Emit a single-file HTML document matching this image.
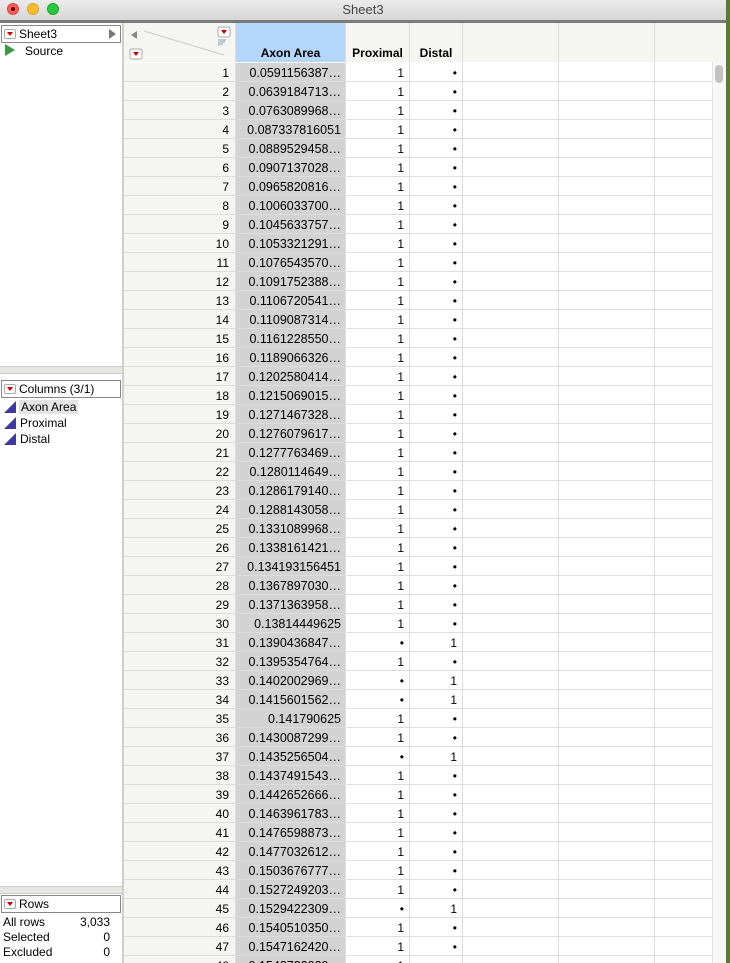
<!DOCTYPE html>
<html><head><meta charset="utf-8"><style>
*{margin:0;padding:0;box-sizing:border-box}
html,body{width:730px;height:963px;overflow:hidden}
body{background:#5a7a35;font-family:"Liberation Sans",Arial,sans-serif;font-size:12px;color:#000;position:relative}
.title{position:absolute;left:0;top:0;width:726px;height:20px;background:linear-gradient(#ececec,#d6d6d6);text-align:center;line-height:19px;font-size:13px;color:#444}
.dot{position:absolute;top:3px;width:12px;height:12px;border-radius:50%}
.bar{position:absolute;left:0;top:20px;width:726px;height:3px;background:#7a7a7a}
.left{position:absolute;left:0;top:23px;width:122px;height:940px;background:#fff;overflow:hidden}
.split{position:absolute;left:122px;top:23px;width:2px;height:940px;background:#cfcfcb}
.sep{position:absolute;left:0;width:122px;height:8px;background:#e6e6e2;border-top:1px solid #ccc;border-bottom:1px solid #ccc}
.box{position:absolute;left:1px;width:120px;height:18px;border:1px solid #888;background:#fff;line-height:16px;padding-left:17px;font-size:12px}
.tri{position:absolute;left:2px;top:3px;width:12px;height:10px;border:1px solid #aaa;border-radius:2px;background:#fff}
.tri:after{content:"";position:absolute;left:2px;top:2px;border-left:3px solid transparent;border-right:3px solid transparent;border-top:4px solid #c00}
.col{position:absolute;left:20px;font-size:12px}
.ic{position:absolute;left:4px;width:0;height:0;border-left:12px solid transparent;border-bottom:12px solid #3b3b9e}
.grid{position:absolute;left:124px;top:23px;width:588px;height:940px;background:#fff;overflow:hidden}
.hdr{position:absolute;top:0;height:39px;background:#f5f5f1;border-right:1px solid #ddd;font-weight:bold;text-align:center;line-height:12px;padding-top:24px}
.row{position:absolute;left:0;width:588px;height:19px;border-bottom:1px solid #ddd}
.c{position:absolute;top:0;height:18px;line-height:20px;border-right:1px solid #ddd;text-align:right;padding-right:5px;white-space:nowrap;overflow:hidden}
.sb{position:absolute;left:712px;top:62px;width:14px;height:901px;background:#f7f7f7;border-left:1px solid #e6e6e6}
</style></head><body>
<div class="title">Sheet3
<div class="dot" style="left:7px;background:#fd5e57;border:1px solid #e0443e"><div style="width:4px;height:4px;background:#600;border-radius:50%;margin:3px"></div></div>
<div class="dot" style="left:27px;background:#febc2e;border:1px solid #dea123"></div>
<div class="dot" style="left:47px;background:#28c840;border:1px solid #1aab29"></div>
</div>
<div class="bar"></div>
<div class="left">
<div class="box" style="top:2px">Sheet3<span class="tri"></span><span style="position:absolute;right:4px;top:3px;border-top:5px solid transparent;border-bottom:5px solid transparent;border-left:7px solid #777"></span></div>
<div style="position:absolute;left:5px;top:21px;border-top:6px solid transparent;border-bottom:6px solid transparent;border-left:10px solid #3a9a4a"></div>
<div style="position:absolute;left:25px;top:21px">Source</div>
<div class="sep" style="top:343px"></div>
<div class="box" style="top:357px">Columns (3/1)<span class="tri"></span></div>
<div class="ic" style="top:378px"></div><div class="col" style="top:377px;background:#e4e4e4;padding:0 2px;left:19px">Axon Area</div>
<div class="ic" style="top:394px"></div><div class="col" style="top:393px">Proximal</div>
<div class="ic" style="top:410px"></div><div class="col" style="top:409px">Distal</div>
<div class="sep" style="top:863px"></div>
<div class="box" style="top:872px">Rows<span class="tri"></span></div>
<div style="position:absolute;left:3px;top:892px;width:107px;line-height:15px">
<div>All rows<span style="float:right">3,033</span></div>
<div>Selected<span style="float:right">0</span></div>
<div>Excluded<span style="float:right">0</span></div>
</div>
</div>
<div class="split"></div>
<div class="grid" id="g">
<div class="hdr" style="left:0;width:112px;background:#f5f5f1">
<svg width="112" height="39" style="position:absolute;left:0;top:0"><line x1="20" y1="8" x2="100" y2="32" stroke="#ccc"/><polygon points="7,12 13,8 13,16" fill="#888"/><rect x="94" y="4" width="12" height="10" rx="2" fill="#fff" stroke="#aaa"/><polygon points="97,7 103,7 100,11" fill="#c00"/><rect x="6" y="26" width="12" height="10" rx="2" fill="#fff" stroke="#aaa"/><polygon points="9,29 15,29 12,33" fill="#c00"/><g stroke="#8aa0b8"><line x1="95" y1="16" x2="95" y2="23"/><line x1="96" y1="17" x2="102" y2="17"/><line x1="96" y1="19" x2="101" y2="19"/><line x1="96" y1="21" x2="99" y2="21"/></g></svg></div>
<div class="hdr" style="left:112px;width:110px;background:#b4d6fb">Axon Area</div>
<div class="hdr" style="left:222px;width:64px">Proximal</div>
<div class="hdr" style="left:286px;width:53px">Distal</div>
<div class="hdr" style="left:339px;width:96px"></div>
<div class="hdr" style="left:435px;width:96px"></div>
<div class="hdr" style="left:531px;width:57px;border-right:none"></div>
</div>
<div style="position:absolute;left:712px;top:23px;width:14px;height:39px;background:#f5f5f1"></div>
<div class="sb"><div style="position:absolute;left:2px;top:3px;width:8px;height:18px;border-radius:4px;background:#c2c2c2"></div></div>
<script>
var v=["0.0591156387…","0.0639184713…","0.0763089968…","0.087337816051","0.0889529458…","0.0907137028…","0.0965820816…","0.1006033700…","0.1045633757…","0.1053321291…","0.1076543570…","0.1091752388…","0.1106720541…","0.1109087314…","0.1161228550…","0.1189066326…","0.1202580414…","0.1215069015…","0.1271467328…","0.1276079617…","0.1277763469…","0.1280114649…","0.1286179140…","0.1288143058…","0.1331089968…","0.1338161421…","0.134193156451","0.1367897030…","0.1371363958…","0.13814449625","0.1390436847…","0.1395354764…","0.1402002969…","0.1415601562…","0.141790625","0.1430087299…","0.1435256504…","0.1437491543…","0.1442652666…","0.1463961783…","0.1476598873…","0.1477032612…","0.1503676777…","0.1527249203…","0.1529422309…","0.1540510350…","0.1547162420…","0.1548732029…"];
var d=[31,33,34,37,45];var h="";
for(var i=0;i<48;i++){var n=i+1,dd=d.indexOf(n)>=0;
h+='<div class="row" style="top:'+(40+i*19)+'px"><div class="c" style="left:0;width:112px;background:#f5f5f1;padding-right:6px">'+n+'</div><div class="c" style="left:112px;width:110px;background:#d3d3d3;padding-right:4px;font-size:12.5px">'+v[i]+'</div><div class="c" style="left:222px;width:64px">'+(dd?'•':'1')+'</div><div class="c" style="left:286px;width:53px">'+(dd?'1':'•')+'</div><div class="c" style="left:339px;width:96px"></div><div class="c" style="left:435px;width:96px"></div><div class="c" style="left:531px;width:57px;border-right:none"></div></div>';}
document.getElementById('g').insertAdjacentHTML('beforeend',h);
</script>
</body></html>
